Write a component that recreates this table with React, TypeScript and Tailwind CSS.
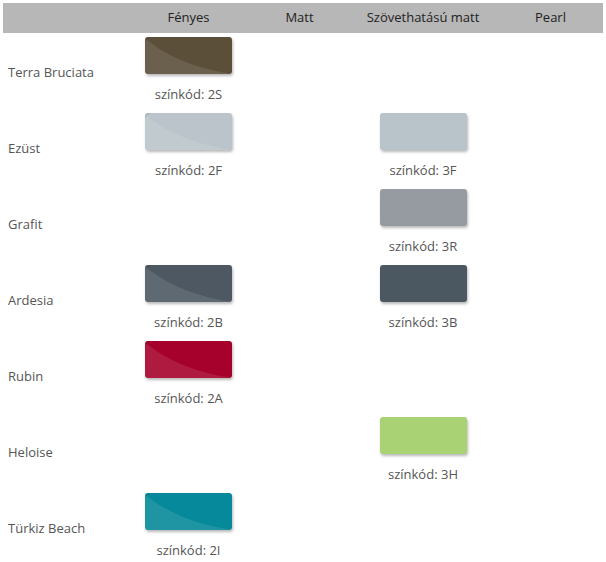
import React from "react";

type Sw = { color: string; code: string; gloss: boolean } | null;

const rows: { name: string; cells: Sw[] }[] = [
  { name: "Terra Bruciata", cells: [{ color: "#5b4f39", code: "2S", gloss: true }, null, null, null] },
  { name: "Ezüst", cells: [{ color: "#bac4ca", code: "2F", gloss: true }, null, { color: "#b8c3ca", code: "3F", gloss: false }, null] },
  { name: "Grafit", cells: [null, null, { color: "#959ba1", code: "3R", gloss: false }, null] },
  { name: "Ardesia", cells: [{ color: "#4d5862", code: "2B", gloss: true }, null, { color: "#4b5761", code: "3B", gloss: false }, null] },
  { name: "Rubin", cells: [{ color: "#a6002c", code: "2A", gloss: true }, null, null, null] },
  { name: "Heloise", cells: [null, null, { color: "#a9d274", code: "3H", gloss: false }, null] },
  { name: "Türkiz Beach", cells: [{ color: "#06899a", code: "2I", gloss: true }, null, null, null] },
];

const cols = "grid grid-cols-[122px_127px_95px_152px_103px]";

function Swatch({ s }: { s: NonNullable<Sw> }) {
  return (
    <div className="flex flex-col items-center pt-[4px]">
      <div
        className="relative w-[87px] h-[37px] rounded-[3px] overflow-hidden shadow-[1px_2px_3px_rgba(0,0,0,0.28)]"
        style={{ backgroundColor: s.color }}
      >
        {s.gloss && (
          <svg width="87" height="37" viewBox="0 0 87 37" className="absolute inset-0">
            <path d="M0 1 C 14 14 42 30 87 37 L0 37 Z" fill="#ffffff" opacity="0.1" />
            <path d="M0 0 L5 0 C 3 2 2 3 0 5 Z" fill="#000000" opacity="0.08" />
          </svg>
        )}
      </div>
      <div className="mt-[11px] leading-[18px] text-[13px] text-[#555]">színkód: {s.code}</div>
    </div>
  );
}

export default function App() {
  return (
    <div className="p-[3px] bg-white w-[606px] h-[562px] overflow-hidden" style={{ fontFamily: '"Open Sans", sans-serif' }}>
      <div className={`${cols} h-[30px] bg-[#b7b7b7] text-[13px] text-[#222] items-center`}>
        <div />
        <div className="text-center">Fényes</div>
        <div className="text-center">Matt</div>
        <div className="text-center">Szövethatású matt</div>
        <div className="text-center">Pearl</div>
      </div>
      {rows.map((r) => (
        <div key={r.name} className={`${cols} h-[76px]`}>
          <div className="flex items-center pl-[5px] pt-[3px] text-[13px] text-[#555]">{r.name}</div>
          {r.cells.map((c, i) => (c ? <Swatch key={i} s={c} /> : <div key={i} />))}
        </div>
      ))}
    </div>
  );
}
